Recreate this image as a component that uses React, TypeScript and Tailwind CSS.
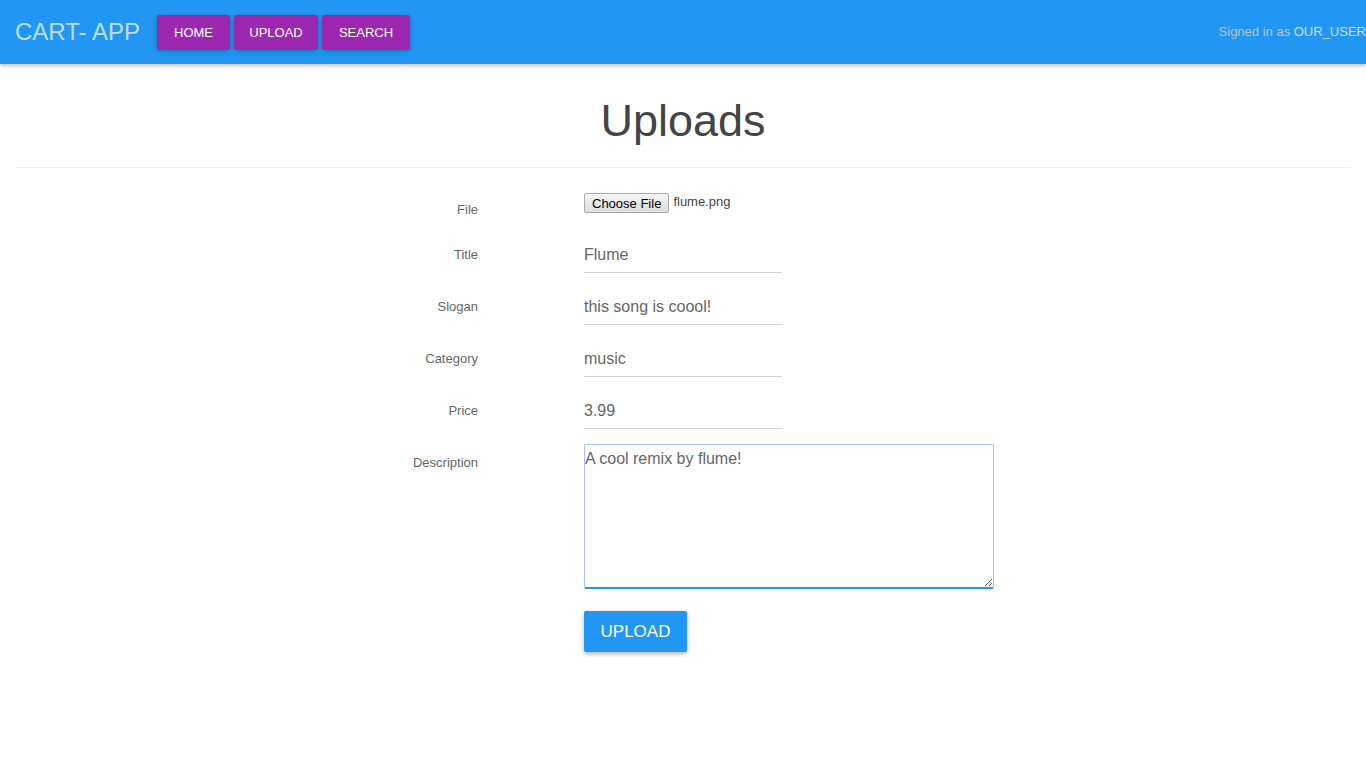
import React from "react";

const font = { fontFamily: '"Liberation Sans", Arial, sans-serif' };

function NavBtn({ label, w }: { label: string; w: string }) {
  return (
    <button
      className={`h-[35px] ${w} rounded-[3px] bg-[#9c27b0] text-white text-[13px] uppercase leading-none shadow-[0_1px_4px_rgba(0,0,0,0.3)]`}
    >
      {label}
    </button>
  );
}

function TextRow({ label, value }: { label: string; value: string }) {
  return (
    <div className="flex h-[52px]">
      <div className="w-[478px] shrink-0 text-right pt-[18px] text-[13px] leading-[17px] text-[#666]">{label}</div>
      <div className="ml-[106px] pt-[8px]">
        <div className="w-[198px] h-[37px] border-b border-[#d6d6d6] flex items-center pt-[1px] text-[16px] text-[#666]">
          {value}
        </div>
      </div>
    </div>
  );
}

export default function App() {
  return (
    <div className="min-h-[768px] bg-white overflow-hidden" style={font}>
      <nav className="h-[64px] bg-[#2196f3] flex items-center shadow-[0_2px_4px_rgba(0,0,0,0.25)] relative z-10">
        <div className="pl-[15px] text-[24px] text-[#bcdffb] leading-none w-[157px]">CART- APP</div>
        <div className="flex gap-[4px]">
          <NavBtn label="HOME" w="w-[73px]" />
          <NavBtn label="UPLOAD" w="w-[84px]" />
          <NavBtn label="SEARCH" w="w-[88px]" />
        </div>
        <div className="ml-auto mr-0 whitespace-nowrap text-[13px] text-[#b7c2cc]">
          Signed in as <span className="text-[#c8e1f8]">OUR_USER</span>
        </div>
      </nav>

      <div className="px-[15px]">
        <div className="mt-[31px] pb-[20px] border-b border-[#eeeeee]">
          <h1 className="text-center text-[45px] leading-[52px] text-[#444]">Uploads</h1>
        </div>

        <div className="mt-[25px] -ml-[15px]">
          <div className="flex h-[35px]">
            <div className="w-[478px] shrink-0 text-right pt-[9px] text-[13px] leading-[15px] text-[#666]">File</div>
            <div className="ml-[106px] flex items-start">
              <button className="h-[20px] px-[7px] text-[13px] leading-none text-black border border-[#a9a9a9] rounded-[2px] bg-gradient-to-b from-[#f6f6f6] to-[#dedede]">
                Choose File
              </button>
              <span className="ml-[4px] text-[13px] leading-[17px] text-[#444]">flume.png</span>
            </div>
          </div>

          <TextRow label="Title" value="Flume" />
          <TextRow label="Slogan" value="this song is coool!" />
          <TextRow label="Category" value="music" />
          <TextRow label="Price" value="3.99" />

          <div className="flex">
            <div className="w-[478px] shrink-0 text-right pt-[18px] text-[13px] leading-[17px] text-[#666]">Description</div>
            <div className="ml-[106px] pt-[8px] flex flex-col items-start">
              <textarea
                readOnly
                defaultValue="A cool remix by flume!"
                className="w-[410px] h-[145px] border border-[#9fc3f8] border-b-2 border-b-[#2196f3] rounded-[2px] outline-none p-0 pt-[4px] text-[16px] text-[#666] leading-[20px]"
                style={font}
              />
              <button className="mt-[22px] w-[103px] h-[41px] rounded-[2px] bg-[#2196f3] text-white text-[17px] shadow-[0_2px_4px_rgba(0,0,0,0.3)]">
                UPLOAD
              </button>
            </div>
          </div>
        </div>
      </div>
    </div>
  );
}
